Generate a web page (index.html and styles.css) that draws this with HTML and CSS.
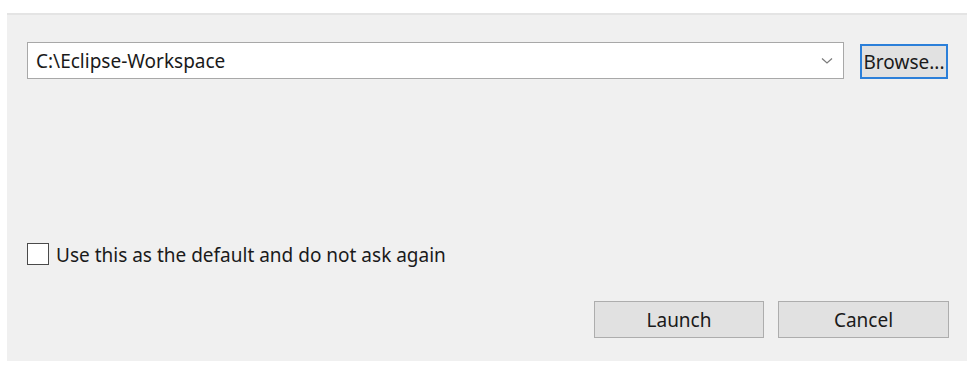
FILE: index.html
```html
<!DOCTYPE html>
<html>
<head>
<meta charset="utf-8">
<link rel="stylesheet" href="styles.css">
</head>
<body>
<div class="panel">
  <div class="row-top">
    <div class="combo">
      <span class="combo-text">C:\Eclipse-Workspace</span>
      <svg class="chev" width="12" height="8" viewBox="0 0 12 8"><path d="M1 1.5 L6 6 L11 1.5" fill="none" stroke="#7a7a7a" stroke-width="1.2"/></svg>
    </div>
    <button class="btn browse">Browse...</button>
  </div>
  <label class="check-row">
    <span class="checkbox"></span>
    <span class="check-label">Use this as the default and do not ask again</span>
  </label>
  <div class="row-buttons">
    <button class="btn action launch">Launch</button>
    <button class="btn action">Cancel</button>
  </div>
</div>
</body>
</html>
```
FILE: styles.css
```css
html, body {
  margin: 0;
  padding: 0;
  background: #ffffff;
}
body {
  width: 978px;
  height: 372px;
  font-family: "Noto Sans", "Open Sans", sans-serif;
  color: #1a1a1a;
}
.panel {
  box-sizing: border-box;
  margin: 13px 11px 0 7px;
  height: 348px;
  background: #f0f0f0;
  border-top: 2px solid #e4e4e4;
  padding: 27px 19px 23px 20px;
  display: flex;
  flex-direction: column;
}
.row-top {
  display: flex;
  align-items: flex-end;
  gap: 16px;
  height: 37px;
}
.combo {
  box-sizing: border-box;
  flex: 1;
  height: 37px;
  background: #ffffff;
  border: 1px solid #a8a8a8;
  display: flex;
  align-items: center;
  justify-content: space-between;
  padding: 0 10px 0 8px;
}
.combo-text {
  font-size: 19px;
}
.chev {
  display: block;
}
.btn {
  box-sizing: border-box;
  font-family: inherit;
  color: #1a1a1a;
  background: #e1e1e1;
  border: 1px solid #adadad;
  padding: 0;
  margin: 0;
}
.browse {
  width: 88px;
  height: 35px;
  border: 2px solid #2b7fd9;
  font-size: 19px;
}
.check-row {
  display: flex;
  align-items: center;
  gap: 7px;
  margin-top: 163px;
  height: 23px;
}
.checkbox {
  box-sizing: border-box;
  width: 22px;
  height: 22px;
  background: #ffffff;
  border: 1px solid #4a4a4a;
}
.check-label {
  font-size: 19px;
  padding-top: 2px;
}
.row-buttons {
  display: flex;
  justify-content: flex-end;
  gap: 14px;
  margin-top: 36px;
  margin-right: -1px;
}
.action {
  width: 171px;
  height: 37px;
  font-size: 19px;
}
.launch {
  width: 170px;
}
```
